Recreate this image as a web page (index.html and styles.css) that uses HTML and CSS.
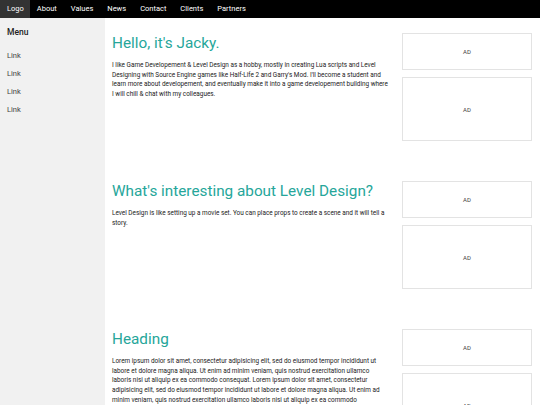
FILE: index.html
```html
<!DOCTYPE html>
<html lang="en">
  <head>
    <meta charset="UTF-8" />
    <meta name="viewport" content="width=device-width, initial-scale=1.0" />
    <title>Jacky</title>
    <link rel="stylesheet" href="styles.css">
  </head>
  <body>
    <div class="topnav">
      <a class="logo" href="#">Logo</a>
      <a href="#">About</a>
      <a href="#">Values</a>
      <a href="#">News</a>
      <a href="#">Contact</a>
      <a href="#">Clients</a>
      <a href="#">Partners</a>
    </div>

    <div class="page">
      <div class="sidebar">
        <h4>Menu</h4>
        <a href="#">Link</a>
        <a href="#">Link</a>
        <a href="#">Link</a>
        <a href="#">Link</a>
      </div>

      <div class="main">
        <div class="section">
          <div class="content">
            <h1>Hello, it's Jacky.</h1>
            <p>I like Game Developement &amp; Level Design as a hobby, mostly in creating Lua scripts and Level Designing with Source Engine games like Half-Life 2 and Garry's Mod. I'll become a student and learn more about developement, and eventually make it into a game developement building where I will chill &amp; chat with my colleagues.</p>
          </div>
          <div class="ads">
            <div class="ad">AD</div>
            <div class="ad tall">AD</div>
          </div>
        </div>

        <div class="section">
          <div class="content">
            <h1>What's interesting about Level Design?</h1>
            <p>Level Design is like setting up a movie set. You can place props to create a scene and it will tell a story.</p>
          </div>
          <div class="ads">
            <div class="ad">AD</div>
            <div class="ad tall">AD</div>
          </div>
        </div>

        <div class="section">
          <div class="content">
            <h1>Heading</h1>
            <p>Lorem ipsum dolor sit amet, consectetur adipisicing elit, sed do eiusmod tempor incididunt ut labore et dolore magna aliqua. Ut enim ad minim veniam, quis nostrud exercitation ullamco laboris nisi ut aliquip ex ea commodo consequat. Lorem ipsum dolor sit amet, consectetur adipisicing elit, sed do eiusmod tempor incididunt ut labore et dolore magna aliqua. Ut enim ad minim veniam, quis nostrud exercitation ullamco laboris nisi ut aliquip ex ea commodo consequat.</p>
          </div>
          <div class="ads">
            <div class="ad">AD</div>
            <div class="ad tall">AD</div>
          </div>
        </div>
      </div>
    </div>
  </body>
</html>
```

FILE: styles.css
```css
body {
  font-family: Roboto, "Liberation Sans", sans-serif;
  margin: 0;
  padding: 0;
  background-color: #fff;
  color: #222;
}
a {
  color: inherit;
  text-decoration: none;
}
.topnav {
  display: flex;
  height: 18px;
  background-color: #000;
}
.topnav a {
  color: #fff;
  font-size: 7.5px;
  line-height: 18px;
  padding: 0 7px;
}
.topnav .logo {
  background-color: #333;
  padding: 0 6px 0 7px;
}
.page {
  display: flex;
  min-height: 387px;
}
.sidebar {
  width: 105px;
  flex-shrink: 0;
  background-color: #f1f1f1;
  padding: 9px 7px;
  box-sizing: border-box;
}
.sidebar h4 {
  font-size: 8.5px;
  font-weight: 500;
  margin: 0 0 10px;
  line-height: 10px;
}
.sidebar a {
  display: block;
  font-size: 7.5px;
  line-height: 18px;
  color: #444;
}
.main {
  flex: 1;
  padding: 15px 8px 0 7px;
}
.section {
  display: flex;
  gap: 7px;
  margin-bottom: 40px;
}
.content {
  flex: 1;
  padding-right: 6px;
}
.content h1 {
  font-size: 15.3px;
  font-weight: 400;
  color: #26a69a;
  margin: 0 0 8px;
  line-height: 20px;
}
.content p {
  font-size: 6.4px;
  line-height: 9.7px;
  margin: 0;
}
.ads {
  width: 130px;
  flex-shrink: 0;
  display: flex;
  flex-direction: column;
  gap: 7px;
}
.ad {
  height: 37px;
  border: 1px solid #e3e3e3;
  box-sizing: border-box;
  display: flex;
  align-items: center;
  justify-content: center;
  font-size: 6px;
  color: #444;
}
.ad.tall {
  height: 64px;
}
```
